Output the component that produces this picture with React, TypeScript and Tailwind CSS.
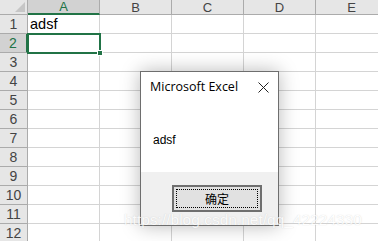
import React from "react";

const cols = ["A", "B", "C", "D", "E"];
const rows = [1, 2, 3, 4, 5, 6, 7, 8, 9, 10, 11, 12];

export default function App() {
  return (
    <div
      className="relative w-[378px] h-[241px] overflow-hidden bg-white"
      style={{ fontFamily: '"Liberation Sans", Arial, sans-serif' }}
    >
      {/* header row */}
      <div className="flex h-[15px]">
        <div className="relative w-[28px] shrink-0 bg-[#e6e6e6] border-r border-b border-[#ababab]">
          <svg className="absolute right-[2px] bottom-[2px]" width="10" height="10" viewBox="0 0 10 10">
            <polygon points="10,0 10,10 0,10" fill="#c6c6c6" />
          </svg>
        </div>
        {cols.map((c) => (
          <div
            key={c}
            className={
              c === "A"
                ? "w-[72px] shrink-0 bg-[#d2d2d2] border-r border-[#ababab] border-b-2 border-b-[#217346] text-[#217346] flex items-center justify-center text-[13px] leading-none"
                : "w-[72px] shrink-0 bg-[#e6e6e6] border-r border-b border-[#ababab] text-[#444] flex items-center justify-center text-[13px] leading-none"
            }
          >
            {c}
          </div>
        ))}
      </div>
      {rows.map((r) => (
        <div key={r} className="flex h-[19px]">
          <div
            className={
              r === 2
                ? "w-[28px] shrink-0 bg-[#d2d2d2] border-b border-[#ababab] border-r-2 border-r-[#217346] text-[#217346] flex items-center justify-center text-[14px] leading-none"
                : "w-[28px] shrink-0 bg-[#e6e6e6] border-b border-r border-[#ababab] text-[#444] flex items-center justify-center text-[14px] leading-none"
            }
          >
            {r}
          </div>
          {cols.map((c) => (
            <div
              key={c}
              className="w-[72px] shrink-0 border-r border-b border-[#d4d4d4] text-[14.5px] leading-none flex items-end pb-[2px] pl-[2px] text-black"
            >
              {r === 1 && c === "A" ? "adsf" : ""}
            </div>
          ))}
        </div>
      ))}

      {/* active cell A2 */}
      <div className="absolute left-[27px] top-[33px] w-[74px] h-[21px] border-2 border-[#217346]" />
      <div className="absolute left-[97px] top-[50px] w-[6px] h-[6px] bg-[#217346] border border-white" />

      {/* dialog */}
      <div
        className="absolute left-[140px] top-[71px] w-[139px] h-[155px] bg-white border border-[#6e6e6e] flex flex-col"
        style={{ boxShadow: "0 0 18px rgba(0,0,0,0.28)" }}
      >
        <div className="flex items-center justify-between h-[30px] pl-[9px] pr-[9px]">
          <span className="text-black" style={{ fontFamily: '"Open Sans", "Liberation Sans", sans-serif', fontSize: "12.5px" }}>
            Microsoft Excel
          </span>
          <svg width="11" height="11" viewBox="0 0 11 11">
            <path d="M0.5 0.5 L10.5 10.5 M10.5 0.5 L0.5 10.5" stroke="#222" strokeWidth="1" />
          </svg>
        </div>
        <div className="flex-1 bg-white pl-[12px] pt-[32px] text-[12px] text-black leading-none">
          adsf
        </div>
        <div className="h-[53px] bg-[#f0f0f0] flex items-start justify-center pt-[13px] pl-[15px]">
          <div className="w-[90px] h-[27px] border-2 border-[#6f6f6f] bg-[#e1e1e1] p-[2px]">
            <div
              className="w-full h-full border border-dotted border-black flex items-center justify-center text-[12px] text-black leading-none"
              style={{ fontFamily: '"Noto Sans CJK SC", sans-serif' }}
            >
              确定
            </div>
          </div>
        </div>
      </div>

      {/* watermark */}
      <div
        className="absolute left-[124px] top-[212px] text-[15.5px] leading-none text-white whitespace-nowrap"
        style={{
          textShadow: "0 0 1px rgba(140,140,140,0.5)",
          opacity: 0.7,
        }}
      >
        https://blog.csdn.net/qq_42224330
      </div>
    </div>
  );
}
